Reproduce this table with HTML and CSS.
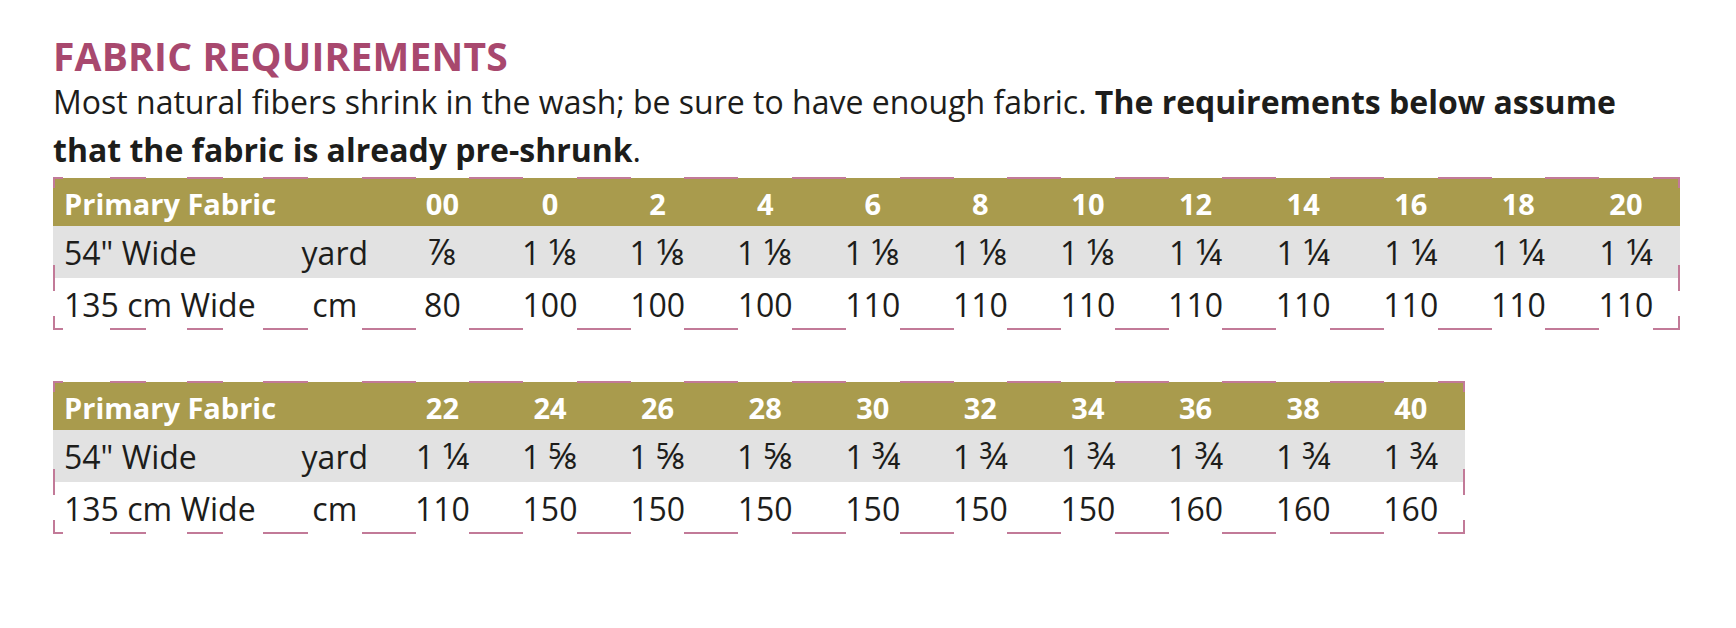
FILE: index.html
```html
<!DOCTYPE html>
<html lang="en">
<head>
<meta charset="utf-8">
<title>Fabric Requirements</title>
<link rel="stylesheet" href="styles.css">
</head>
<body>
<main class="page">
  <h1 class="title">FABRIC REQUIREMENTS</h1>
  <p class="intro">Most natural fibers shrink in the wash; be sure to have enough fabric. <strong>The requirements below assume that the fabric is already pre-shrunk</strong>.</p>

  <table class="req">
    <colgroup><col class="c-lbl"><col class="c-num"><col class="c-num"><col class="c-num"><col class="c-num"><col class="c-num"><col class="c-num"><col class="c-num"><col class="c-num"><col class="c-num"><col class="c-num"><col class="c-num"><col class="c-num"><col class="c-num"></colgroup>
    <thead>
      <tr class="hdr"><th class="lbl">Primary Fabric</th><th></th><th>00</th><th>0</th><th>2</th><th>4</th><th>6</th><th>8</th><th>10</th><th>12</th><th>14</th><th>16</th><th>18</th><th>20</th></tr>
    </thead>
    <tbody>
      <tr class="yard"><td class="lbl">54" Wide</td><td>yard</td><td><span class="frac">⅞</span></td><td>1 <span class="frac">⅛</span></td><td>1 <span class="frac">⅛</span></td><td>1 <span class="frac">⅛</span></td><td>1 <span class="frac">⅛</span></td><td>1 <span class="frac">⅛</span></td><td>1 <span class="frac">⅛</span></td><td>1 <span class="frac">¼</span></td><td>1 <span class="frac">¼</span></td><td>1 <span class="frac">¼</span></td><td>1 <span class="frac">¼</span></td><td>1 <span class="frac">¼</span></td></tr>
      <tr class="cm"><td class="lbl">135 cm Wide</td><td>cm</td><td>80</td><td>100</td><td>100</td><td>100</td><td>110</td><td>110</td><td>110</td><td>110</td><td>110</td><td>110</td><td>110</td><td>110</td></tr>
    </tbody>
  </table>

  <table class="req">
    <colgroup><col class="c-lbl"><col class="c-num"><col class="c-num"><col class="c-num"><col class="c-num"><col class="c-num"><col class="c-num"><col class="c-num"><col class="c-num"><col class="c-num"><col class="c-num"><col class="c-num"></colgroup>
    <thead>
      <tr class="hdr"><th class="lbl">Primary Fabric</th><th></th><th>22</th><th>24</th><th>26</th><th>28</th><th>30</th><th>32</th><th>34</th><th>36</th><th>38</th><th>40</th></tr>
    </thead>
    <tbody>
      <tr class="yard"><td class="lbl">54" Wide</td><td>yard</td><td>1 <span class="frac">¼</span></td><td>1 <span class="frac">⅝</span></td><td>1 <span class="frac">⅝</span></td><td>1 <span class="frac">⅝</span></td><td>1 <span class="frac">¾</span></td><td>1 <span class="frac">¾</span></td><td>1 <span class="frac">¾</span></td><td>1 <span class="frac">¾</span></td><td>1 <span class="frac">¾</span></td><td>1 <span class="frac">¾</span></td></tr>
      <tr class="cm"><td class="lbl">135 cm Wide</td><td>cm</td><td>110</td><td>150</td><td>150</td><td>150</td><td>150</td><td>150</td><td>150</td><td>160</td><td>160</td><td>160</td></tr>
    </tbody>
  </table>
</main>
</body>
</html>
```

FILE: styles.css
```css
:root {
  --pk: #c27a98;
  --olive: #a99b4d;
  --grey: #e2e2e2;
  --ink: #1d1d1b;
  --plum: #a8486e;
  --dash-num: linear-gradient(to right, var(--pk) 25%, transparent 25% 75%, var(--pk) 75%);
  --dash-lbl: linear-gradient(to right, var(--pk) 0 10px, transparent 10px 57px, var(--pk) 57px 93px, transparent 93px 134px, var(--pk) 134px 170px, transparent 170px 210px, var(--pk) 210px);
}

html, body {
  margin: 0;
  background: #fff;
}

body {
  font-family: "Open Sans", "Noto Sans", sans-serif;
  color: var(--ink);
}

.page {
  padding: 33px 0 40px 53px;
}

.title {
  margin: 0;
  font-size: 39px;
  line-height: 45px;
  font-weight: 700;
  letter-spacing: 0.2px;
  color: var(--plum);
}

.intro {
  margin: 0 0 3px;
  max-width: 1590px;
  font-size: 32px;
  line-height: 48px;
}

.intro strong {
  font-weight: 700;
}

.req {
  border-collapse: collapse;
  border-spacing: 0;
  table-layout: fixed;
  margin-bottom: 51px;
}

.c-lbl { width: 228px; }
.c-num { width: 107.6px; }

.req th,
.req td {
  padding: 0;
  text-align: center;
  white-space: nowrap;
  background-image: var(--edge-top, none), var(--edge-bottom, none), var(--edge-side, none), var(--fill, none);
  background-repeat: no-repeat;
  background-size: 100% 2px, 100% 2px, 2px 100%, 100% calc(100% - 1px);
  background-position: left top, left bottom, var(--side-pos, left) top, left bottom;
}

.req .lbl {
  text-align: left;
  padding-left: 11px;
  --edge-side: var(--side);
  --side-pos: left;
}

.req tr > :last-child {
  --edge-side: var(--side);
  --side-pos: right;
}

.hdr {
  --side: linear-gradient(to bottom, var(--pk) 0 11px, transparent 11px);
}
.hdr th {
  --fill: linear-gradient(var(--olive), var(--olive));
  color: #fff;
  font-size: 29px;
  font-weight: 700;
  line-height: 45px;
  padding-top: 4px;
  --edge-top: var(--dash-num);
}
.hdr th.lbl {
  --edge-top: var(--dash-lbl);
}

.yard {
  --side: linear-gradient(to bottom, transparent calc(100% - 13px), var(--pk) calc(100% - 13px));
}
.yard td {
  background-color: var(--grey);
  font-size: 32px;
  line-height: 50px;
  padding-top: 2px;
}

.cm {
  --side: linear-gradient(to bottom, var(--pk) 0 13px, transparent 13px calc(100% - 14px), var(--pk) calc(100% - 14px));
}
.cm td {
  background-color: #fff;
  font-size: 32px;
  line-height: 50px;
  padding-top: 2px;
  --edge-bottom: var(--dash-num);
}
.cm td.lbl {
  --edge-bottom: var(--dash-lbl);
}

.frac {
  font-size: 1.12em;
  line-height: 0;
}
```
